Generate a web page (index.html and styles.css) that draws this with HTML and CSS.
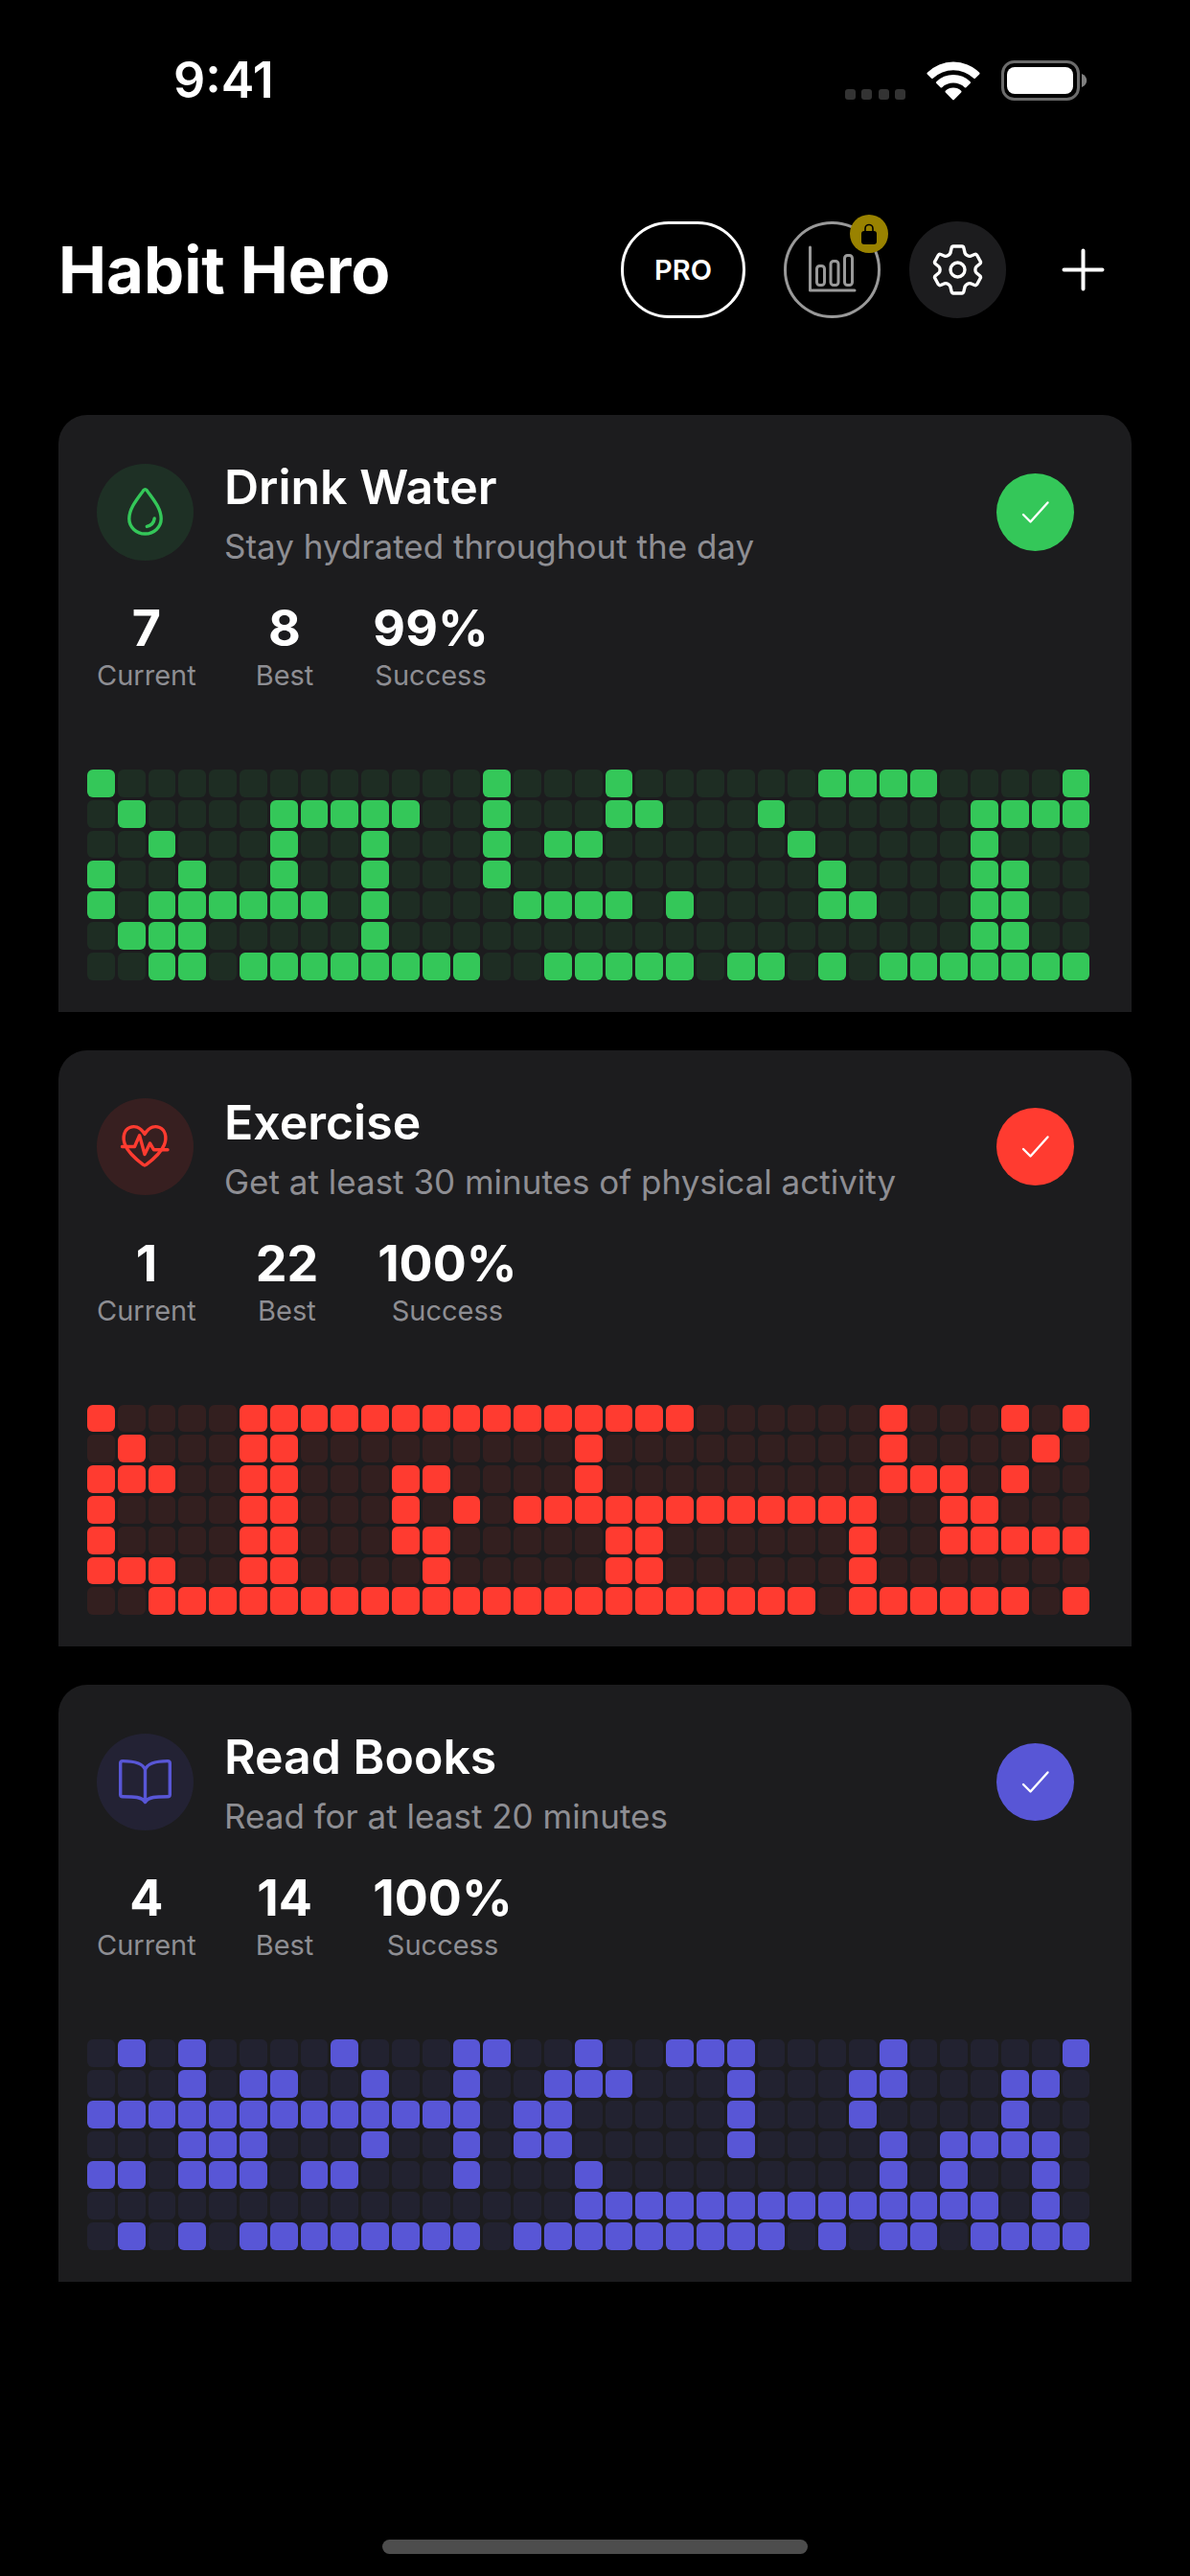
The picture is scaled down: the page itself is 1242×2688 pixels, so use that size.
FILE: index.html
```html
<!DOCTYPE html>
<html lang="en">
<head>
<meta charset="utf-8">
<meta name="viewport" content="width=device-width, initial-scale=1">
<title>Habit Hero</title>
<link rel="stylesheet" href="styles.css">
</head>
<body>
<div class="app">
  <div class="status-bar">
    <span class="time">9:41</span>
    <div class="status-icons">
      <svg class="signal" width="63" height="12" viewBox="0 0 63 12" fill="#333" aria-hidden="true">
        <rect width="11" height="11" rx="3"/><rect x="17" width="11" height="11" rx="3"/><rect x="35" width="11" height="11" rx="3"/><rect x="52" width="11" height="11" rx="3"/>
      </svg>
      <svg class="wifi" width="56" height="41" viewBox="0 0 56 41" fill="#fff" aria-hidden="true">
        <path d="M0.8 11.8a38.5 38.5 0 0 1 54.4 0q.8.8 0 1.6l-4.300 4.300q-.8.6-1.600 0a31 31 0 0 0-42.600 0q-.8.6-1.600 0l-4.300-4.300q-.8-.8 0-1.600z"/>
        <path d="M10.300 21.300a25 25 0 0 1 35.400 0q.8.8 0 1.600l-4.300 4.300q-.8.6-1.600 0a17.500 17.500 0 0 0-23.600 0q-.8.6-1.600 0l-4.300-4.300q-.8-.8 0-1.600z"/>
        <path d="M19.800 30.800a12 12 0 0 1 16.400 0q.8.8 0 1.600l-7.400 7.600q-.8.8-1.600 0l-7.400-7.600q-.8-.8 0-1.600z"/>
      </svg>
      <svg class="battery" width="90" height="42" viewBox="0 0 90 42" aria-hidden="true">
        <rect x="1.500" y="1.500" width="79" height="39" rx="12" fill="none" stroke="#6b6b6b" stroke-width="3"/>
        <rect x="6" y="7" width="69" height="28" rx="8" fill="#fff"/>
        <path d="M84 14c7 3 7 11 0 14z" fill="#808080"/>
      </svg>
    </div>
  </div>

  <header class="header">
    <h1 class="title">Habit Hero</h1>
    <div class="actions">
      <button class="btn btn-pro" type="button">PRO</button>
      <button class="btn btn-stats" type="button" aria-label="Statistics">
        <svg class="glyph" viewBox="0 0 101 101" fill="none" stroke="#999" stroke-width="3" stroke-linecap="round" stroke-linejoin="round" aria-hidden="true">
          <path d="M27.500 27V72H74"/>
          <rect x="34.500" y="46.500" width="8" height="20" rx="3"/>
          <rect x="49" y="41.500" width="8" height="25" rx="3"/>
          <rect x="63.500" y="35.500" width="8" height="31" rx="3"/>
        </svg>
        <svg class="badge" viewBox="0 0 40 40" aria-hidden="true">
          <circle cx="20" cy="20" r="20" fill="#998200"/>
          <rect x="12" y="17" width="16" height="14" rx="3" fill="#000"/>
          <path d="M16 18v-3.500a4 4 0 0 1 8 0V18" fill="none" stroke="#000" stroke-width="1.600"/>
        </svg>
      </button>
      <button class="btn btn-settings" type="button" aria-label="Settings">
        <svg class="glyph" viewBox="-50.500 -50.500 101 101" fill="none" stroke="#fff" stroke-width="3.400" stroke-linejoin="round" aria-hidden="true">
          <path d="M-4.500-24.500H4.500Q6-24.500 6.400-22.700L7.600-17.500Q8.300-15.800 10-14.900Q12-13.800 13.500-14.300L17.600-16Q19.300-16.600 20.200-15.200L23.700-8.800Q24.500-7.500 23.200-6.300L19.600-3.300Q18.400-2.200 18.400 0Q18.400 2.200 19.600 3.300L23.200 6.300Q24.500 7.500 23.700 8.800L20.200 15.200Q19.300 16.600 17.600 16L13.500 14.300Q12 13.800 10 14.900Q8.300 15.800 7.600 17.500L6.400 22.700Q6 24.500 4.500 24.500H-4.500Q-6 24.500-6.400 22.700L-7.600 17.500Q-8.300 15.800-10 14.900Q-12 13.800-13.500 14.300L-17.600 16Q-19.300 16.600-20.200 15.200L-23.700 8.800Q-24.500 7.500-23.200 6.300L-19.600 3.300Q-18.400 2.200-18.400 0Q-18.400-2.200-19.600-3.300L-23.200-6.300Q-24.500-7.500-23.700-8.800L-20.200-15.200Q-19.300-16.600-17.600-16L-13.500-14.300Q-12-13.800-10-14.900Q-8.300-15.800-7.600-17.500L-6.400-22.700Q-6-24.500-4.500-24.500Z"/>
          <circle r="7.500"/>
        </svg>
      </button>
      <button class="btn btn-add" type="button" aria-label="Add habit">
        <svg class="glyph" viewBox="0 0 101 101" stroke="#fff" stroke-width="4" stroke-linecap="round" aria-hidden="true">
          <path d="M50.500 30.500V70.500M30.500 50.500H70.500"/>
        </svg>
      </button>
    </div>
  </header>

  <main class="habits">
    <article class="card green">
      <div class="card-head">
        <div class="habit-icon">
          <svg class="glyph" viewBox="0 0 101 101" fill="none" stroke="currentColor" stroke-width="3.400" stroke-linecap="round" stroke-linejoin="round" aria-hidden="true">
            <path d="M48.800 27.600Q50.500 25.600 52.200 27.600C58 36 67.200 46 67.200 57.300A16.700 15.700 0 0 1 33.800 57.300C33.800 46 43 36 48.800 27.600Z"/>
            <path d="M60.200 57Q59.500 63.500 52.300 65.400"/>
          </svg>
        </div>
        <div class="habit-text">
          <h2 class="name">Drink Water</h2>
          <p class="desc">Stay hydrated throughout the day</p>
        </div>
        <button class="check" type="button" aria-pressed="true" aria-label="Drink Water done today">
          <svg class="glyph" viewBox="0 0 81 81" fill="none" stroke="#fff" stroke-width="2.400" stroke-linecap="round" stroke-linejoin="round" aria-hidden="true"><path d="M28 43L35.500 50.500L53.500 30.500"/></svg>
        </button>
      </div>
      <dl class="stats">
        <div class="stat"><dt>Current</dt><dd>7</dd></div>
        <div class="stat"><dt>Best</dt><dd>8</dd></div>
        <div class="stat"><dt>Success</dt><dd>99%</dd></div>
      </dl>
      <div class="grid" data-rows="100000000000010001000000111100001 010000111110010001100010000001111 001000100100010110000001000001000 100100100100010000000000100001100 101111110100001111010000110001100 011100000100000000000000000001100 001101111111100111110110101111111"></div>
    </article>

    <article class="card red">
      <div class="card-head">
        <div class="habit-icon">
          <svg class="glyph" viewBox="0 0 101 101" fill="none" stroke="currentColor" stroke-width="3.400" stroke-linecap="round" stroke-linejoin="round" aria-hidden="true">
            <path d="M50 37.500C45 29 38.500 28.800 34.500 30.500C28.500 33 26.500 40.500 29.500 48.500C33.500 58 42 64.500 48.500 69.300Q50 70.600 51.500 69.300C58 64.500 66.500 58 70.500 48.500C73.500 40.500 71.500 33 65.500 30.500C61.500 28.800 55 29 50 37.500Z"/>
            <path d="M26.500 50.500H39.500L44.600 38.800L50 58.500L55.500 47L59.600 53.800H74"/>
          </svg>
        </div>
        <div class="habit-text">
          <h2 class="name">Exercise</h2>
          <p class="desc">Get at least 30 minutes of physical activity</p>
        </div>
        <button class="check" type="button" aria-pressed="true" aria-label="Exercise done today">
          <svg class="glyph" viewBox="0 0 81 81" fill="none" stroke="#fff" stroke-width="2.400" stroke-linecap="round" stroke-linejoin="round" aria-hidden="true"><path d="M28 43L35.500 50.500L53.500 30.500"/></svg>
        </button>
      </div>
      <dl class="stats">
        <div class="stat"><dt>Current</dt><dd>1</dd></div>
        <div class="stat"><dt>Best</dt><dd>22</dd></div>
        <div class="stat"><dt>Success</dt><dd>100%</dd></div>
      </dl>
      <div class="grid" data-rows="100001111111111111110000001000101 010001100000000010000000001000010 111001100011000010000000001110100 100001100010101111111111110011000 100001100011000001100000010011111 111001100001000001100000010000000 001111111111111111111111011111101"></div>
    </article>

    <article class="card indigo">
      <div class="card-head">
        <div class="habit-icon">
          <svg class="glyph" viewBox="0 0 101 101" fill="none" stroke="currentColor" stroke-width="3.400" stroke-linecap="round" stroke-linejoin="round" aria-hidden="true">
            <path d="M50.500 37.500C48 30.500 39 28.600 27 28.600Q24.700 28.600 24.700 30.800V63.500Q24.700 65.700 27 65.700C39 65.700 47 66 50.500 71.500C54 66 62 65.700 74 65.700Q76.300 65.700 76.300 63.500V30.800Q76.300 28.600 74 28.600C62 28.600 53 30.500 50.500 37.500V71"/>
          </svg>
        </div>
        <div class="habit-text">
          <h2 class="name">Read Books</h2>
          <p class="desc">Read for at least 20 minutes</p>
        </div>
        <button class="check" type="button" aria-pressed="true" aria-label="Read Books done today">
          <svg class="glyph" viewBox="0 0 81 81" fill="none" stroke="#fff" stroke-width="2.400" stroke-linecap="round" stroke-linejoin="round" aria-hidden="true"><path d="M28 43L35.500 50.500L53.500 30.500"/></svg>
        </button>
      </div>
      <dl class="stats">
        <div class="stat"><dt>Current</dt><dd>4</dd></div>
        <div class="stat"><dt>Best</dt><dd>14</dd></div>
        <div class="stat"><dt>Success</dt><dd>100%</dd></div>
      </dl>
      <div class="grid" data-rows="010100001000110010011100001000001 000101100100100111000100011000110 111111111111101100000100010000100 000111000100101100000100001011110 110111011000100010000000001010010 000000000000000011111111111111010 010101111111101111111110101101111"></div>
    </article>
  </main>

  <div class="home-indicator"></div>
</div>
<script src="grid.js"></script>
</body>
</html>
```

FILE: styles.css
```css
* {
  box-sizing: border-box;
}

body {
  margin: 0;
  background: #000;
  color: #fff;
  font-family: Inter, "Liberation Sans", sans-serif;
}

h1, h2, p, dl, dt, dd {
  margin: 0;
}

button {
  padding: 0;
  border: 0;
  background: none;
  color: inherit;
  font: inherit;
  cursor: pointer;
}

svg {
  display: block;
}

.app {
  display: flex;
  flex-direction: column;
  min-height: 100vh;
  padding: 0 61px;
}

.status-bar {
  display: flex;
  align-items: center;
  justify-content: space-between;
  height: 168px;
  padding: 0 46px 0 120px;
}

.time {
  font-size: 52px;
  font-weight: 600;
  line-height: 60px;
}

.status-icons {
  display: flex;
  align-items: flex-end;
  gap: 22px;
}

.header {
  display: flex;
  align-items: center;
  justify-content: space-between;
  margin-top: 63px;
}

.title {
  font-size: 67px;
  font-weight: 700;
  line-height: 80px;
}

.actions {
  display: flex;
  gap: 30px;
}

.btn {
  position: relative;
  width: 101px;
  height: 101px;
  border-radius: 50px;
}

.btn-pro {
  width: 130px;
  margin-right: 10px;
  border: 3px solid #fff;
  font-size: 29px;
  font-weight: 600;
}

.btn-stats {
  box-shadow: inset 0 0 0 3px #999;
}

.btn-settings {
  background: #1c1c1e;
}

.glyph {
  width: 100%;
  height: 100%;
}

.badge {
  position: absolute;
  top: -7px;
  right: -8px;
  width: 40px;
  height: 40px;
}

.habits {
  display: flex;
  flex-direction: column;
  gap: 40px;
  margin-top: 101px;
}

.card {
  padding: 45px 44px 33px 30px;
  border-radius: 30px 30px 0 0;
  background: #1c1c1e;
}

.green {
  --tint: #34c759;
}

.red {
  --tint: #ff3b30;
}

.indigo {
  --tint: #5856d6;
}

.card-head {
  display: flex;
  align-items: center;
  padding: 0 16px 0 10px;
}

.habit-icon {
  flex: none;
  width: 101px;
  height: 101px;
  border-radius: 50%;
  background: color-mix(in srgb, var(--tint) 12%, transparent);
  color: var(--tint);
}

.habit-text {
  flex: 1;
  margin-left: 32px;
}

.name {
  font-size: 50px;
  font-weight: 600;
  line-height: 60px;
}

.desc {
  margin-top: 12px;
  color: #8e8e93;
  font-size: 35px;
  line-height: 40px;
}

.check {
  flex: none;
  width: 81px;
  height: 81px;
  border-radius: 50%;
  background: var(--tint);
}

.stats {
  display: flex;
  gap: 62px;
  margin-top: 36px;
  padding-left: 10px;
}

.stat {
  display: flex;
  flex-direction: column-reverse;
  text-align: center;
}

.stat dt {
  color: #8e8e93;
  font-size: 29px;
  line-height: 38px;
}

.stat dd {
  font-size: 52px;
  font-weight: 700;
  line-height: 60px;
}

.grid {
  display: grid;
  grid-template-columns: repeat(33, 1fr);
  gap: 3px;
  margin-top: 79px;
}

.cell {
  aspect-ratio: 1;
  border-radius: 6px;
  background: color-mix(in srgb, var(--tint) 10%, transparent);
}

.cell.done {
  background: var(--tint);
}

.home-indicator {
  width: 444px;
  height: 15px;
  margin: auto auto 23px;
  border-radius: 8px;
  background: #4d4d4d;
}
```

FILE: grid.js
```js
// Each grid lists its weekday rows as strings of 1 (done) and 0 (missed).
document.querySelectorAll(".grid").forEach((grid) => {
  for (const mark of grid.dataset.rows.replace(/\s/g, "")) {
    const cell = document.createElement("span");
    cell.className = mark === "1" ? "cell done" : "cell";
    grid.append(cell);
  }
});
```
